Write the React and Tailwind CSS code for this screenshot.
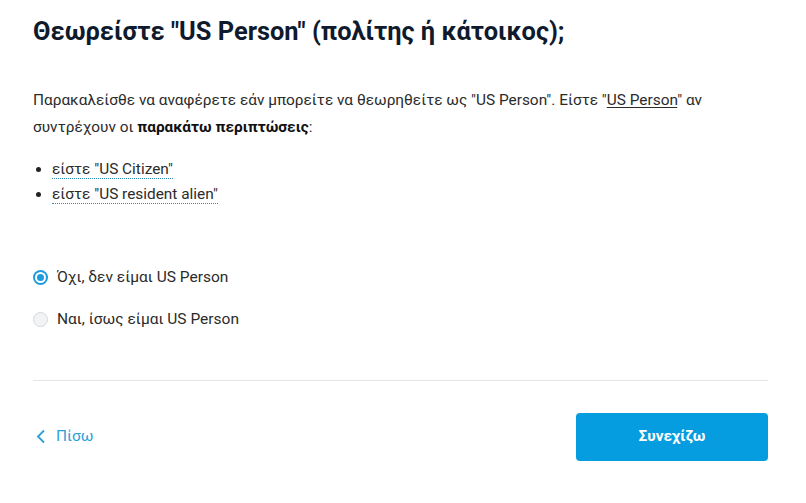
import React, { useState } from 'react';

function Radio({ checked, label, onClick }) {
  return (
    <label className="flex items-center gap-[9px] cursor-pointer" onClick={onClick}>
      {checked ? (
        <span className="flex h-[15px] w-[15px] items-center justify-center rounded-full bg-[#1c9be0]">
          <span className="flex h-[11px] w-[11px] items-center justify-center rounded-full bg-white">
            <span className="h-[7px] w-[7px] rounded-full bg-[#1c9be0]" />
          </span>
        </span>
      ) : (
        <span className="h-[15px] w-[15px] rounded-full border border-[#d5d9de] bg-[#f1f3f5]" />
      )}
      <span className="text-[15.5px] leading-[22px] text-[#2b2b2b]">{label}</span>
    </label>
  );
}

export default function App() {
  const [choice, setChoice] = useState('no');

  return (
    <div className="min-h-screen bg-white pl-[33px] pr-[38px] pt-[13px] text-[#2b2b2b] font-['Roboto','Liberation_Sans',sans-serif]">
      <h1 className="text-[25.4px] font-bold leading-[36px] text-[#0f1b2d]">
        Θεωρείστε "US Person" (πολίτης ή κάτοικος);
      </h1>

      <p className="mt-[38px] text-[15.4px] leading-[27px]">
        Παρακαλείσθε να αναφέρετε εάν μπορείτε να θεωρηθείτε ως "US Person". Είστε "<span className="underline underline-offset-2">US Person</span>" αν συντρέχουν οι <b className="font-bold text-[#111]">παρακάτω περιπτώσεις</b>:
      </p>

      <ul className="mt-[16px] list-disc pl-[19px] text-[15.4px] leading-[25px] marker:text-[#222]">
        <li>
          <span className="border-b border-dotted border-[#2a8fb8]">είστε "US Citizen"</span>
        </li>
        <li>
          <span className="border-b border-dotted border-[#2a8fb8]">είστε "US resident alien"</span>
        </li>
      </ul>

      <div className="mt-[59px] flex flex-col gap-[20px]">
        <Radio checked={choice === 'no'} label="Όχι, δεν είμαι US Person" onClick={() => setChoice('no')} />
        <Radio checked={choice === 'yes'} label="Ναι, ίσως είμαι US Person" onClick={() => setChoice('yes')} />
      </div>

      <div className="mt-[50px] border-t border-[#e3e5e8]" />

      <div className="mt-[32px] flex items-center justify-between">
        <button className="flex items-center gap-[10px] pl-[3px] text-[15.4px] text-[#2a9fd8]">
          <svg width="10" height="15" viewBox="0 0 10 15" fill="none">
            <path d="M8 1.5 2 7.5l6 6" stroke="#2a9fd8" strokeWidth="1.8" />
          </svg>
          Πίσω
        </button>
        <button className="flex h-[48px] w-[192px] items-center justify-center rounded-[4px] bg-[#069de0] text-[15.4px] font-bold text-white">
          Συνεχίζω
        </button>
      </div>
    </div>
  );
}
